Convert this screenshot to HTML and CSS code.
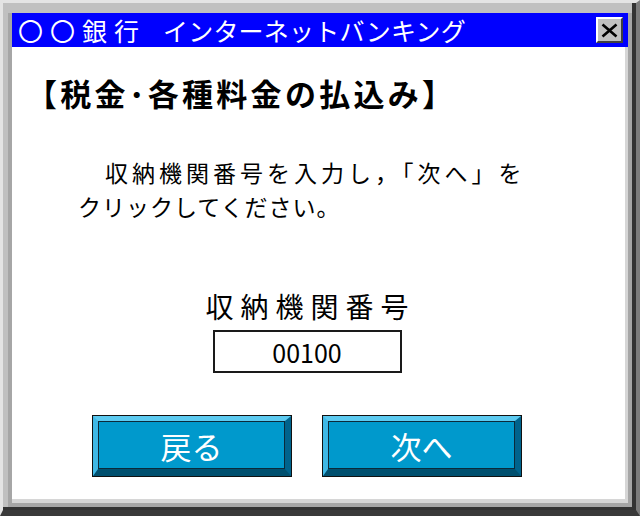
FILE: index.html
```html
<!DOCTYPE html>
<html lang="ja">
<head>
<meta charset="utf-8">
<title>〇〇銀行 インターネットバンキング</title>
<link rel="stylesheet" href="styles.css">
</head>
<body>
<div class="window">
  <div class="frame">
    <div class="column">
      <div class="titlebar">
        <span class="title"><span class="title-bank">〇〇銀行</span><span class="title-service">インターネットバンキング</span></span>
        <span class="close">
          <svg width="17" height="15" viewBox="0 0 17 15"><path d="M1.5 1.5 L15.5 13.5 M15.5 1.5 L1.5 13.5" stroke="#000" stroke-width="2.6" fill="none"/></svg>
        </span>
      </div>
      <div class="client">
        <h1 class="heading">【税金･各種料金の払込み】</h1>
        <p class="msg"><span class="msg-line1">　収納機関番号を入力し，「次へ」を</span><br><span class="msg-line2">クリックしてください。</span></p>
        <div class="form">
          <div class="label">収納機関番号</div>
          <div class="field">00100</div>
          <div class="buttons">
            <div class="btn"><div class="btn-bevel"><div class="btn-face">戻る</div></div></div>
            <div class="btn"><div class="btn-bevel"><div class="btn-face">次へ</div></div></div>
          </div>
        </div>
      </div>
    </div>
  </div>
</div>
</body>
</html>
```
FILE: styles.css
```css
html, body {
  margin: 0;
  padding: 0;
  background: #c0c0c0;
}
body {
  font-family: "Noto Sans CJK JP", "Noto Sans", sans-serif;
}
.window {
  width: 640px;
  height: 516px;
  box-sizing: border-box;
  display: flex;
  background: #c0c0c0;
  border-top: 3px solid #e4e4e4;
  border-left: 3px solid #e4e4e4;
  border-right: 4px solid #7c7c7c;
  border-bottom: 6px solid #3a3a3a;
}
.frame {
  flex: 1;
  display: flex;
  padding: 10px 0 0 5px;
  border-right: 4px solid #333;
  border-bottom: 3px solid #333;
}
.column {
  flex: 1;
  display: flex;
  flex-direction: column;
  border-left: 4px solid #a6a6a6;
  border-right: 4px solid #a6a6a6;
  border-bottom: 4px solid #a6a6a6;
}
.titlebar {
  height: 34px;
  flex: none;
  background: #0000ff;
  display: flex;
  align-items: center;
  justify-content: space-between;
  padding: 0 5px 0 6px;
}
.title {
  color: #fff;
  font-size: 25px;
  line-height: 34px;
  white-space: nowrap;
}
.title-bank {
  letter-spacing: 7px;
}
.title-service {
  margin-left: 17px;
  letter-spacing: 0.2px;
}
.close {
  width: 27px;
  height: 26px;
  box-sizing: border-box;
  background: #c0c0c0;
  border-style: solid;
  border-width: 2px;
  border-color: #ffffff #404040 #404040 #ffffff;
  display: flex;
  align-items: center;
  justify-content: center;
}
.client {
  flex: 1;
  background: #fff;
  border-right: 3px solid #d6d6d6;
  border-bottom: 4px solid #d6d6d6;
  overflow: hidden;
}
.heading {
  margin: 26px 0 0 14px;
  font-size: 31px;
  font-weight: bold;
  letter-spacing: 3.3px;
  line-height: 40px;
  color: #000;
  white-space: nowrap;
}
.msg {
  margin: 42px 0 0 66px;
  font-size: 23px;
  line-height: 34px;
  color: #000;
  white-space: nowrap;
}
.msg-line1 {
  letter-spacing: 4px;
}
.msg-line2 {
  letter-spacing: 1px;
}
.form {
  margin: 65px 0 0 80px;
  width: 430px;
  display: flex;
  flex-direction: column;
  align-items: center;
}
.label {
  font-size: 28px;
  letter-spacing: 7px;
  padding-left: 7px;
  line-height: 36px;
  color: #000;
}
.field {
  margin-top: 6px;
  width: 189px;
  height: 43px;
  box-sizing: border-box;
  border: 2px solid #1a1a1a;
  display: flex;
  align-items: center;
  justify-content: center;
  font-size: 25px;
  color: #000;
}
.buttons {
  margin-top: 42px;
  align-self: stretch;
  display: flex;
  gap: 30px;
}
.btn {
  width: 200px;
  height: 62px;
  box-sizing: border-box;
  border: 1px solid #111;
}
.btn-bevel {
  height: 100%;
  box-sizing: border-box;
  border-style: solid;
  border-width: 5px 6px 7px 5px;
  border-color: #5ccaf0 #00638c #00506f #3fb8e6;
}
.btn-face {
  height: 100%;
  box-sizing: border-box;
  border: 1px solid #0b2a3a;
  background: #0099cc;
  color: #fff;
  font-size: 31px;
  display: flex;
  align-items: center;
  justify-content: center;
}
```
